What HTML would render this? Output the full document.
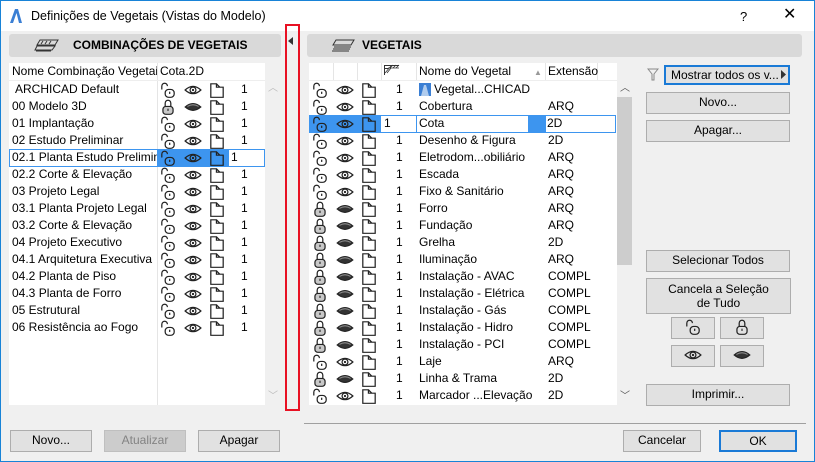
<!DOCTYPE html>
<html><head><meta charset="utf-8"><style>
*{margin:0;padding:0;box-sizing:border-box}
body{width:815px;height:462px;background:#f0f0f0;font-family:"Liberation Sans","DejaVu Sans",sans-serif;font-size:12px;color:#000;position:relative;overflow:hidden}
.a{position:absolute}
.win{left:0;top:0;width:815px;height:462px;border:1px solid #1883d7}
.title{left:1px;top:1px;width:813px;height:30px;background:#fff}
.hdr{background:#d9d9d9;border-radius:3px;font-weight:bold;font-size:12px;line-height:22px}
.list{background:#fff}
.t{position:absolute;white-space:nowrap;line-height:17px}
.btn{position:absolute;background:#e1e1e1;border:1px solid #adadad;text-align:center;line-height:19px;font-size:12px}
svg.i{position:absolute;width:18px;height:18px;margin:-1px 0 0 -1px}
.sel{background:#3d95ef}
</style></head><body>
<svg width="0" height="0" style="position:absolute">
<defs>
<symbol id="lo" viewBox="0 0 16 16"><path d="M2.5 7.5V4.5a2.5 2.5 0 0 1 5 0" fill="none" stroke="#222" stroke-width="1.1"/><rect x="5.5" y="7.5" width="8" height="7" rx="3" fill="none" stroke="#222" stroke-width="1.1"/><path d="M9.5 9.5v2" stroke="#222" stroke-width="1.1"/></symbol>
<symbol id="lc" viewBox="0 0 16 16"><path d="M5.5 7.5V4.5a2.5 2.5 0 0 1 5 0v3" fill="none" stroke="#222" stroke-width="1.1"/><rect x="3.5" y="7.5" width="9" height="7" rx="2.5" fill="#c8c8c8" stroke="#222" stroke-width="1.1"/><path d="M8 9.5v2" stroke="#222"/></symbol>
<symbol id="eo" viewBox="0 0 16 16"><path d="M1 8Q8 1.5 15 8Q8 14.5 1 8Z" fill="none" stroke="#222" stroke-width="1.1"/><circle cx="8" cy="8" r="2.6" fill="none" stroke="#222" stroke-width="1.1"/><circle cx="8" cy="8" r="1" fill="#222"/></symbol>
<symbol id="ec" viewBox="0 0 16 16"><path d="M1 8Q8 2 15 8Q8 14 1 8Z" fill="#333" stroke="#222"/><path d="M3 7.5Q8 4.5 13 7.5" stroke="#888" fill="none"/></symbol>
<symbol id="pg" viewBox="0 0 16 16"><path d="M2.5 2.5h5v3h6v9h-11zM7.5 2.5l3 3" fill="none" stroke="#222" stroke-width="1.1"/></symbol>
</defs></svg>
<div class="a win"></div>
<div class="a title"></div>
<svg class="a" style="left:9px;top:8px" width="14" height="16"><path d="M1 15L6 1h3l4 14h-3L7.5 5 4 15z" fill="#3b7fd4"/></svg>
<div class="t" style="left:31px;top:8px;font-size:12.5px">Definições de Vegetais (Vistas do Modelo)</div>
<div class="t" style="left:740px;top:8px;font-size:13px">?</div>
<div class="t" style="left:783px;top:6px;font-size:16px">✕</div>

<div class="a hdr" style="left:9px;top:34px;width:272px;height:23px"><span style="position:absolute;left:64px">COMBINAÇÕES DE VEGETAIS</span></div>
<svg class="a" style="left:34px;top:38px" width="28" height="15"><path d="M6 2h18l-3 5H3zM3 8h18l-3 4H1zM2 13h15" fill="none" stroke="#333"/><path d="M9 3l-2 3M13 3l-2 3M17 3l-2 3" stroke="#333"/></svg>
<div class="a hdr" style="left:307px;top:34px;width:495px;height:23px"><span style="position:absolute;left:55px">VEGETAIS</span></div>
<svg class="a" style="left:330px;top:38px" width="26" height="15"><path d="M6 2h18l-3 5H3zM4 9h17M3 11h17M2 13h17" fill="none" stroke="#333"/></svg>

<div class="a" style="left:285px;top:24px;width:15px;height:387px;border:2px solid #e81123"></div>
<svg class="a" style="left:288px;top:37px" width="6" height="8"><path d="M5 0v8L0 4z" fill="#333"/></svg>

<div class="a list" style="left:9px;top:63px;width:256px;height:342px"></div>
<div class="a" style="left:157px;top:63px;width:1px;height:342px;background:#e5e5e5"></div>
<div class="t" style="left:12px;top:63px;width:145px;overflow:hidden">Nome Combinação Vegetais</div>
<div class="t" style="left:160px;top:63px">Cota.2D</div>
<div class="a" style="left:9px;top:80px;width:256px;height:1px;background:#eee"></div>
<div class="a" style="left:265px;top:63px;width:17px;height:342px;background:#f0f0f0"></div>
<div class="t" style="left:268px;top:80px;color:#bbb;font-size:10px">︿</div>
<div class="t" style="left:268px;top:388px;color:#bbb;font-size:10px">﹀</div>

<div class="a" style="left:9px;top:149px;width:256px;height:18px;border:1px solid #3d95ef"></div>
<div class="a sel" style="left:157px;top:149px;width:72px;height:18px"></div>

<div class="t" style="left:15px;top:81px">ARCHICAD Default</div>
<div class="t" style="left:12px;top:98px">00 Modelo 3D</div>
<div class="t" style="left:12px;top:115px">01 Implantação</div>
<div class="t" style="left:12px;top:132px">02 Estudo Preliminar</div>
<div class="t" style="left:12px;top:149px;width:145px;overflow:hidden">02.1 Planta Estudo Preliminar</div>
<div class="t" style="left:12px;top:166px">02.2 Corte &amp; Elevação</div>
<div class="t" style="left:12px;top:183px">03 Projeto Legal</div>
<div class="t" style="left:12px;top:200px">03.1 Planta Projeto Legal</div>
<div class="t" style="left:12px;top:217px">03.2 Corte &amp; Elevação</div>
<div class="t" style="left:12px;top:234px">04 Projeto Executivo</div>
<div class="t" style="left:12px;top:251px">04.1 Arquitetura Executiva</div>
<div class="t" style="left:12px;top:268px">04.2 Planta de Piso</div>
<div class="t" style="left:12px;top:285px">04.3 Planta de Forro</div>
<div class="t" style="left:12px;top:302px">05 Estrutural</div>
<div class="t" style="left:12px;top:319px">06 Resistência ao Fogo</div>

<svg class="i" style="left:160px;top:82px"><use href="#lo"/></svg><svg class="i" style="left:185px;top:82px"><use href="#eo"/></svg><svg class="i" style="left:209px;top:82px"><use href="#pg"/></svg><div class="t" style="left:241px;top:81px">1</div>
<svg class="i" style="left:160px;top:99px"><use href="#lc"/></svg><svg class="i" style="left:185px;top:99px"><use href="#ec"/></svg><svg class="i" style="left:209px;top:99px"><use href="#pg"/></svg><div class="t" style="left:241px;top:98px">1</div>
<svg class="i" style="left:160px;top:116px"><use href="#lo"/></svg><svg class="i" style="left:185px;top:116px"><use href="#eo"/></svg><svg class="i" style="left:209px;top:116px"><use href="#pg"/></svg><div class="t" style="left:241px;top:115px">1</div>
<svg class="i" style="left:160px;top:133px"><use href="#lo"/></svg><svg class="i" style="left:185px;top:133px"><use href="#eo"/></svg><svg class="i" style="left:209px;top:133px"><use href="#pg"/></svg><div class="t" style="left:241px;top:132px">1</div>
<svg class="i" style="left:160px;top:150px"><use href="#lo"/></svg><svg class="i" style="left:185px;top:150px"><use href="#eo"/></svg><svg class="i" style="left:209px;top:150px"><use href="#pg"/></svg><div class="t" style="left:231px;top:149px">1</div>
<svg class="i" style="left:160px;top:167px"><use href="#lo"/></svg><svg class="i" style="left:185px;top:167px"><use href="#eo"/></svg><svg class="i" style="left:209px;top:167px"><use href="#pg"/></svg><div class="t" style="left:241px;top:166px">1</div>
<svg class="i" style="left:160px;top:184px"><use href="#lo"/></svg><svg class="i" style="left:185px;top:184px"><use href="#eo"/></svg><svg class="i" style="left:209px;top:184px"><use href="#pg"/></svg><div class="t" style="left:241px;top:183px">1</div>
<svg class="i" style="left:160px;top:201px"><use href="#lo"/></svg><svg class="i" style="left:185px;top:201px"><use href="#eo"/></svg><svg class="i" style="left:209px;top:201px"><use href="#pg"/></svg><div class="t" style="left:241px;top:200px">1</div>
<svg class="i" style="left:160px;top:218px"><use href="#lo"/></svg><svg class="i" style="left:185px;top:218px"><use href="#eo"/></svg><svg class="i" style="left:209px;top:218px"><use href="#pg"/></svg><div class="t" style="left:241px;top:217px">1</div>
<svg class="i" style="left:160px;top:235px"><use href="#lo"/></svg><svg class="i" style="left:185px;top:235px"><use href="#eo"/></svg><svg class="i" style="left:209px;top:235px"><use href="#pg"/></svg><div class="t" style="left:241px;top:234px">1</div>
<svg class="i" style="left:160px;top:252px"><use href="#lo"/></svg><svg class="i" style="left:185px;top:252px"><use href="#eo"/></svg><svg class="i" style="left:209px;top:252px"><use href="#pg"/></svg><div class="t" style="left:241px;top:251px">1</div>
<svg class="i" style="left:160px;top:269px"><use href="#lo"/></svg><svg class="i" style="left:185px;top:269px"><use href="#eo"/></svg><svg class="i" style="left:209px;top:269px"><use href="#pg"/></svg><div class="t" style="left:241px;top:268px">1</div>
<svg class="i" style="left:160px;top:286px"><use href="#lo"/></svg><svg class="i" style="left:185px;top:286px"><use href="#eo"/></svg><svg class="i" style="left:209px;top:286px"><use href="#pg"/></svg><div class="t" style="left:241px;top:285px">1</div>
<svg class="i" style="left:160px;top:303px"><use href="#lo"/></svg><svg class="i" style="left:185px;top:303px"><use href="#eo"/></svg><svg class="i" style="left:209px;top:303px"><use href="#pg"/></svg><div class="t" style="left:241px;top:302px">1</div>
<svg class="i" style="left:160px;top:320px"><use href="#lo"/></svg><svg class="i" style="left:185px;top:320px"><use href="#eo"/></svg><svg class="i" style="left:209px;top:320px"><use href="#pg"/></svg><div class="t" style="left:241px;top:319px">1</div>

<div class="btn" style="left:10px;top:430px;width:82px;height:22px">Novo...</div>
<div class="btn" style="left:104px;top:430px;width:82px;height:22px;background:#ccc;border-color:#bfbfbf;color:#838383">Atualizar</div>
<div class="btn" style="left:198px;top:430px;width:82px;height:22px">Apagar</div>

<div class="a list" style="left:309px;top:63px;width:308px;height:342px"></div>
<div class="a" style="left:309px;top:80px;width:308px;height:1px;background:#eee"></div>
<div class="a" style="left:333px;top:63px;width:1px;height:17px;background:#e5e5e5"></div>
<div class="a" style="left:357px;top:63px;width:1px;height:17px;background:#e5e5e5"></div>
<div class="a" style="left:381px;top:63px;width:1px;height:17px;background:#e5e5e5"></div>
<div class="a" style="left:416px;top:63px;width:1px;height:17px;background:#e5e5e5"></div>
<div class="a" style="left:545px;top:63px;width:1px;height:17px;background:#e5e5e5"></div>
<div class="a" style="left:597px;top:63px;width:1px;height:17px;background:#e5e5e5"></div>
<svg class="a" style="left:383px;top:64px" width="18" height="12"><path d="M1.5 11V1.5H16M1.5 4.5H5" fill="none" stroke="#333"/><path d="M2 9l6-7M4 9l4-5M7 4l3-3M10 4l3-3M13 4l3-3M5 4h11" stroke="#333" stroke-width=".8"/></svg>
<div class="t" style="left:419px;top:63px">Nome do Vegetal</div>
<div class="t" style="left:534px;top:64px;font-size:8px;color:#999">▲</div>
<div class="t" style="left:548px;top:63px">Extensão</div>
<div class="a" style="left:617px;top:80px;width:15px;height:325px;background:#f0f0f0"></div>
<div class="a" style="left:617px;top:97px;width:15px;height:168px;background:#cdcdcd"></div>
<div class="t" style="left:620px;top:80px;color:#555;font-size:10px">︿</div>
<div class="t" style="left:620px;top:388px;color:#555;font-size:10px">﹀</div>

<div class="a" style="left:309px;top:115px;width:307px;height:18px;border:1px solid #3d95ef"></div>
<div class="a sel" style="left:309px;top:115px;width:72px;height:18px"></div>
<div class="a sel" style="left:528px;top:115px;width:17px;height:18px"></div>
<div class="a" style="left:416px;top:115px;width:1px;height:18px;background:#3d95ef"></div>
<div class="a" style="left:545px;top:115px;width:1px;height:18px;background:#3d95ef"></div>

<svg class="a" style="left:419px;top:83px" width="12" height="13"><rect width="12" height="13" fill="#3b7fd4"/><path d="M2 13L5 2h2l3 11" fill="#fff" opacity=".6"/></svg>
<div class="t" style="left:434px;top:81px">Vegetal...CHICAD</div>
<div class="t" style="left:419px;top:98px">Cobertura</div><div class="t" style="left:548px;top:98px">ARQ</div>
<div class="t" style="left:419px;top:115px">Cota</div><div class="t" style="left:547px;top:115px">2D</div>
<div class="t" style="left:419px;top:132px">Desenho &amp; Figura</div><div class="t" style="left:548px;top:132px">2D</div>
<div class="t" style="left:419px;top:149px">Eletrodom...obiliário</div><div class="t" style="left:548px;top:149px">ARQ</div>
<div class="t" style="left:419px;top:166px">Escada</div><div class="t" style="left:548px;top:166px">ARQ</div>
<div class="t" style="left:419px;top:183px">Fixo &amp; Sanitário</div><div class="t" style="left:548px;top:183px">ARQ</div>
<div class="t" style="left:419px;top:200px">Forro</div><div class="t" style="left:548px;top:200px">ARQ</div>
<div class="t" style="left:419px;top:217px">Fundação</div><div class="t" style="left:548px;top:217px">ARQ</div>
<div class="t" style="left:419px;top:234px">Grelha</div><div class="t" style="left:548px;top:234px">2D</div>
<div class="t" style="left:419px;top:251px">Iluminação</div><div class="t" style="left:548px;top:251px">ARQ</div>
<div class="t" style="left:419px;top:268px">Instalação - AVAC</div><div class="t" style="left:548px;top:268px">COMPL</div>
<div class="t" style="left:419px;top:285px">Instalação - Elétrica</div><div class="t" style="left:548px;top:285px">COMPL</div>
<div class="t" style="left:419px;top:302px">Instalação - Gás</div><div class="t" style="left:548px;top:302px">COMPL</div>
<div class="t" style="left:419px;top:319px">Instalação - Hidro</div><div class="t" style="left:548px;top:319px">COMPL</div>
<div class="t" style="left:419px;top:336px">Instalação - PCI</div><div class="t" style="left:548px;top:336px">COMPL</div>
<div class="t" style="left:419px;top:353px">Laje</div><div class="t" style="left:548px;top:353px">ARQ</div>
<div class="t" style="left:419px;top:370px">Linha &amp; Trama</div><div class="t" style="left:548px;top:370px">2D</div>
<div class="t" style="left:419px;top:387px">Marcador ...Elevação</div><div class="t" style="left:548px;top:387px">2D</div>

<svg class="i" style="left:312px;top:82px"><use href="#lo"/></svg><svg class="i" style="left:337px;top:82px"><use href="#eo"/></svg><svg class="i" style="left:361px;top:82px"><use href="#pg"/></svg><div class="t" style="left:396px;top:81px">1</div>
<svg class="i" style="left:312px;top:99px"><use href="#lo"/></svg><svg class="i" style="left:337px;top:99px"><use href="#eo"/></svg><svg class="i" style="left:361px;top:99px"><use href="#pg"/></svg><div class="t" style="left:396px;top:98px">1</div>
<svg class="i" style="left:312px;top:116px"><use href="#lo"/></svg><svg class="i" style="left:337px;top:116px"><use href="#eo"/></svg><svg class="i" style="left:361px;top:116px"><use href="#pg"/></svg><div class="t" style="left:384px;top:115px">1</div>
<svg class="i" style="left:312px;top:133px"><use href="#lo"/></svg><svg class="i" style="left:337px;top:133px"><use href="#eo"/></svg><svg class="i" style="left:361px;top:133px"><use href="#pg"/></svg><div class="t" style="left:396px;top:132px">1</div>
<svg class="i" style="left:312px;top:150px"><use href="#lo"/></svg><svg class="i" style="left:337px;top:150px"><use href="#eo"/></svg><svg class="i" style="left:361px;top:150px"><use href="#pg"/></svg><div class="t" style="left:396px;top:149px">1</div>
<svg class="i" style="left:312px;top:167px"><use href="#lo"/></svg><svg class="i" style="left:337px;top:167px"><use href="#eo"/></svg><svg class="i" style="left:361px;top:167px"><use href="#pg"/></svg><div class="t" style="left:396px;top:166px">1</div>
<svg class="i" style="left:312px;top:184px"><use href="#lo"/></svg><svg class="i" style="left:337px;top:184px"><use href="#eo"/></svg><svg class="i" style="left:361px;top:184px"><use href="#pg"/></svg><div class="t" style="left:396px;top:183px">1</div>
<svg class="i" style="left:312px;top:201px"><use href="#lc"/></svg><svg class="i" style="left:337px;top:201px"><use href="#ec"/></svg><svg class="i" style="left:361px;top:201px"><use href="#pg"/></svg><div class="t" style="left:396px;top:200px">1</div>
<svg class="i" style="left:312px;top:218px"><use href="#lc"/></svg><svg class="i" style="left:337px;top:218px"><use href="#ec"/></svg><svg class="i" style="left:361px;top:218px"><use href="#pg"/></svg><div class="t" style="left:396px;top:217px">1</div>
<svg class="i" style="left:312px;top:235px"><use href="#lc"/></svg><svg class="i" style="left:337px;top:235px"><use href="#ec"/></svg><svg class="i" style="left:361px;top:235px"><use href="#pg"/></svg><div class="t" style="left:396px;top:234px">1</div>
<svg class="i" style="left:312px;top:252px"><use href="#lc"/></svg><svg class="i" style="left:337px;top:252px"><use href="#ec"/></svg><svg class="i" style="left:361px;top:252px"><use href="#pg"/></svg><div class="t" style="left:396px;top:251px">1</div>
<svg class="i" style="left:312px;top:269px"><use href="#lc"/></svg><svg class="i" style="left:337px;top:269px"><use href="#ec"/></svg><svg class="i" style="left:361px;top:269px"><use href="#pg"/></svg><div class="t" style="left:396px;top:268px">1</div>
<svg class="i" style="left:312px;top:286px"><use href="#lc"/></svg><svg class="i" style="left:337px;top:286px"><use href="#ec"/></svg><svg class="i" style="left:361px;top:286px"><use href="#pg"/></svg><div class="t" style="left:396px;top:285px">1</div>
<svg class="i" style="left:312px;top:303px"><use href="#lc"/></svg><svg class="i" style="left:337px;top:303px"><use href="#ec"/></svg><svg class="i" style="left:361px;top:303px"><use href="#pg"/></svg><div class="t" style="left:396px;top:302px">1</div>
<svg class="i" style="left:312px;top:320px"><use href="#lc"/></svg><svg class="i" style="left:337px;top:320px"><use href="#ec"/></svg><svg class="i" style="left:361px;top:320px"><use href="#pg"/></svg><div class="t" style="left:396px;top:319px">1</div>
<svg class="i" style="left:312px;top:337px"><use href="#lc"/></svg><svg class="i" style="left:337px;top:337px"><use href="#ec"/></svg><svg class="i" style="left:361px;top:337px"><use href="#pg"/></svg><div class="t" style="left:396px;top:336px">1</div>
<svg class="i" style="left:312px;top:354px"><use href="#lo"/></svg><svg class="i" style="left:337px;top:354px"><use href="#eo"/></svg><svg class="i" style="left:361px;top:354px"><use href="#pg"/></svg><div class="t" style="left:396px;top:353px">1</div>
<svg class="i" style="left:312px;top:371px"><use href="#lc"/></svg><svg class="i" style="left:337px;top:371px"><use href="#ec"/></svg><svg class="i" style="left:361px;top:371px"><use href="#pg"/></svg><div class="t" style="left:396px;top:370px">1</div>
<svg class="i" style="left:312px;top:388px"><use href="#lo"/></svg><svg class="i" style="left:337px;top:388px"><use href="#eo"/></svg><svg class="i" style="left:361px;top:388px"><use href="#pg"/></svg><div class="t" style="left:396px;top:387px">1</div>

<svg class="a" style="left:647px;top:68px" width="12" height="13"><path d="M1 1h10L7 6v6H5V6z" fill="none" stroke="#888"/></svg>
<div class="btn" style="left:664px;top:65px;width:126px;height:20px;border:2px solid #1a7ad6;line-height:16px;text-align:left;padding-left:5px">Mostrar todos os v...</div>
<svg class="a" style="left:781px;top:70px" width="5" height="9"><path d="M0 0l5 4.5L0 9z" fill="#333"/></svg>
<div class="btn" style="left:646px;top:92px;width:144px;height:22px">Novo...</div>
<div class="btn" style="left:646px;top:120px;width:144px;height:22px">Apagar...</div>
<div class="btn" style="left:646px;top:250px;width:144px;height:22px">Selecionar Todos</div>
<div class="btn" style="left:646px;top:278px;width:145px;height:36px;line-height:14px;padding-top:3px">Cancela a Seleção<br>de Tudo</div>
<div class="btn" style="left:671px;top:317px;width:44px;height:22px"></div>
<div class="btn" style="left:720px;top:317px;width:44px;height:22px"></div>
<div class="btn" style="left:671px;top:345px;width:44px;height:22px"></div>
<div class="btn" style="left:720px;top:345px;width:44px;height:22px"></div>
<svg class="i" style="left:685px;top:319px"><use href="#lo"/></svg>
<svg class="i" style="left:734px;top:319px" viewBox="0 0 16 16"><path d="M5.5 7.5V4.5a2.5 2.5 0 0 1 5 0v3" fill="none" stroke="#222" stroke-width="1.1"/><rect x="3.5" y="7.5" width="9" height="7" rx="2.5" fill="none" stroke="#222" stroke-width="1.1"/><path d="M8 9.5v2" stroke="#222"/></svg>
<svg class="i" style="left:685px;top:347px"><use href="#eo"/></svg>
<svg class="i" style="left:734px;top:347px"><use href="#ec"/></svg>
<div class="btn" style="left:646px;top:384px;width:144px;height:22px">Imprimir...</div>

<div class="a" style="left:304px;top:423px;width:502px;height:1px;background:#a0a0a0"></div>
<div class="btn" style="left:623px;top:430px;width:78px;height:22px">Cancelar</div>
<div class="btn" style="left:719px;top:430px;width:78px;height:22px;border:2px solid #1a7ad6;line-height:18px">OK</div>
</body></html>
